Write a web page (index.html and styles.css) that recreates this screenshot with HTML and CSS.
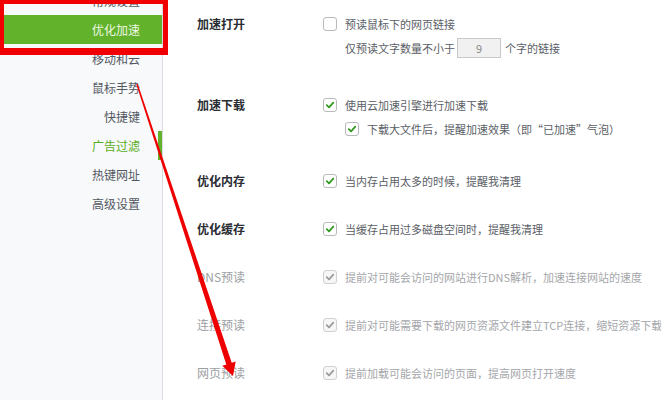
FILE: index.html
```html
<!DOCTYPE html>
<html lang="zh-CN">
<head>
<meta charset="utf-8">
<title>优化加速</title>
<link rel="stylesheet" href="styles.css">
</head>
<body>
<div class="page">
  <aside class="side">
    <ul class="menu">
      <li class="item">常规设置</li>
      <li class="item active">优化加速</li>
      <li class="item">移动和云</li>
      <li class="item">鼠标手势</li>
      <li class="item">快捷键</li>
      <li class="item current">广告过滤</li>
      <li class="item">热键网址</li>
      <li class="item">高级设置</li>
    </ul>
  </aside>
  <main class="content">
    <section class="sec s1">
      <div class="label">加速打开</div>
      <div class="opts">
        <div class="opt"><span class="cb"></span><span>预读鼠标下的网页链接</span></div>
        <div class="opt plain">仅预读文字数量不小于<span class="num">9</span>个字的链接</div>
      </div>
    </section>
    <section class="sec s2">
      <div class="label">加速下载</div>
      <div class="opts">
        <div class="opt"><span class="cb on"><svg viewBox="0 0 14 14"><path d="M3.2 7.2 L5.9 9.8 L10.8 4.2"/></svg></span><span>使用云加速引擎进行加速下载</span></div>
        <div class="opt sub"><span class="cb on"><svg viewBox="0 0 14 14"><path d="M3.2 7.2 L5.9 9.8 L10.8 4.2"/></svg></span><span>下载大文件后，提醒加速效果（即“已加速”气泡）</span></div>
      </div>
    </section>
    <section class="sec s3">
      <div class="label">优化内存</div>
      <div class="opts">
        <div class="opt"><span class="cb on"><svg viewBox="0 0 14 14"><path d="M3.2 7.2 L5.9 9.8 L10.8 4.2"/></svg></span><span>当内存占用太多的时候，提醒我清理</span></div>
      </div>
    </section>
    <section class="sec">
      <div class="label">优化缓存</div>
      <div class="opts">
        <div class="opt"><span class="cb on"><svg viewBox="0 0 14 14"><path d="M3.2 7.2 L5.9 9.8 L10.8 4.2"/></svg></span><span>当缓存占用过多磁盘空间时，提醒我清理</span></div>
      </div>
    </section>
    <section class="sec off">
      <div class="label">DNS预读</div>
      <div class="opts">
        <div class="opt"><span class="cb on"><svg viewBox="0 0 14 14"><path d="M3.2 7.2 L5.9 9.8 L10.8 4.2"/></svg></span><span>提前对可能会访问的网站进行DNS解析，加速连接网站的速度</span></div>
      </div>
    </section>
    <section class="sec off">
      <div class="label">连接预读</div>
      <div class="opts">
        <div class="opt"><span class="cb on"><svg viewBox="0 0 14 14"><path d="M3.2 7.2 L5.9 9.8 L10.8 4.2"/></svg></span><span>提前对可能需要下载的网页资源文件建立TCP连接，缩短资源下载时间</span></div>
      </div>
    </section>
    <section class="sec off">
      <div class="label">网页预读</div>
      <div class="opts">
        <div class="opt"><span class="cb on"><svg viewBox="0 0 14 14"><path d="M3.2 7.2 L5.9 9.8 L10.8 4.2"/></svg></span><span>提前加载可能会访问的页面，提高网页打开速度</span></div>
      </div>
    </section>
  </main>
  <div class="redbox"></div>
  <svg class="arrow" viewBox="0 0 661 400" width="661" height="400">
    <polygon points="137.7,83.8 231.7,362.7 235.7,361.4 233,376 222.3,365.8 226.3,364.5 136.3,84.2"/>
  </svg>
</div>
</body>
</html>
```
FILE: styles.css
```css
html, body {
  margin: 0;
  padding: 0;
  background: #ffffff;
}
body {
  width: 661px;
  height: 400px;
  overflow: hidden;
  font-family: "Noto Sans CJK SC", "Noto Sans", sans-serif;
}
.page {
  position: relative;
  display: flex;
  width: 661px;
  height: 400px;
  overflow: hidden;
}
.side {
  width: 162px;
  flex: none;
  background: #f8f9fb;
  border-right: 1px solid #d9dbde;
}
.menu {
  list-style: none;
  margin: -14px 0 0 0;
  padding: 0;
}
.item {
  position: relative;
  height: 29px;
  line-height: 29px;
  text-align: right;
  padding-right: 22px;
  font-size: 12px;
  color: #525861;
  white-space: nowrap;
}
.item.active {
  background: #62b32b;
  color: #eef8e4;
}
.item.current {
  color: #58ad22;
}
.item.current::after {
  content: "";
  position: absolute;
  right: 0;
  top: 0;
  bottom: 0;
  width: 4px;
  background: #62b32b;
}
.content {
  flex: 1;
  padding: 12px 0 0 34px;
  white-space: nowrap;
  min-width: 0;
}
.sec {
  display: flex;
  margin-bottom: 24px;
}
.sec.s1 { margin-bottom: 33px; }
.sec.s2 { margin-bottom: 28px; }
.label {
  width: 126px;
  flex: none;
  line-height: 24px;
  font-size: 12px;
  font-weight: bold;
  color: #2a2d33;
}
.opts {
  display: flex;
  flex-direction: column;
}
.opt {
  display: flex;
  align-items: center;
  height: 24px;
  font-size: 11px;
  color: #5a5e66;
}
.opt.plain {
  padding-left: 22px;
}
.opt.sub {
  padding-left: 22px;
}
.cb {
  width: 14px;
  height: 14px;
  box-sizing: border-box;
  border: 1px solid #b7b9bd;
  border-radius: 3px;
  background: #ffffff;
  margin-right: 8px;
  flex: none;
  display: flex;
  align-items: center;
  justify-content: center;
}
.cb svg {
  width: 12px;
  height: 12px;
}
.cb svg path {
  fill: none;
  stroke: #2f9a1c;
  stroke-width: 2;
  stroke-linecap: round;
  stroke-linejoin: round;
}
.num {
  display: inline-block;
  width: 44px;
  height: 20px;
  box-sizing: border-box;
  margin: 0 4px 0 2px;
  border: 1px solid #c9c9c9;
  background: #f1f1f1;
  color: #8a8a8a;
  text-align: center;
  line-height: 18px;
  font-size: 11px;
}
.sec.off .label {
  font-weight: normal;
  color: #9c9ea2;
}
.sec.off .opt {
  color: #a4a6aa;
}
.sec.off .cb {
  border-color: #cfd0d2;
  background: #f6f6f6;
}
.sec.off .cb svg path {
  stroke: #9a9a9a;
}
.redbox {
  position: absolute;
  left: 0;
  top: -1px;
  width: 168px;
  height: 56px;
  box-sizing: border-box;
  border-style: solid;
  border-color: #f00000;
  border-width: 5px 5px 7px 4px;
}
.arrow {
  position: absolute;
  left: 0;
  top: 0;
  pointer-events: none;
}
.arrow polygon {
  fill: #ee0000;
}
```
